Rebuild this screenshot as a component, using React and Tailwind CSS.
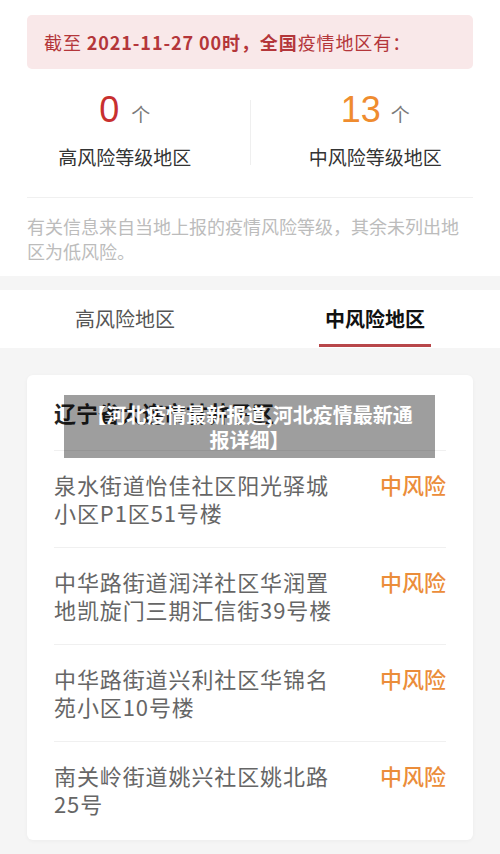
export default function App() {
  const rows = [
    ["泉水街道怡佳社区阳光驿城", "小区P1区51号楼"],
    ["中华路街道润洋社区华润置", "地凯旋门三期汇信街39号楼"],
    ["中华路街道兴利社区华锦名", "苑小区10号楼"],
    ["南关岭街道姚兴社区姚北路", "25号"],
  ];
  return (
    <div className="w-[500px] min-h-[854px] bg-[#f5f5f5] overflow-hidden relative" style={{ fontFamily: '"Noto Sans CJK SC", "Noto Sans", sans-serif' }}>
      <div className="bg-white px-[27px] pt-[15px] pb-[12px]">
        <div className="h-[54px] rounded-[5px] bg-[#f9e8e9] pl-[17px] flex items-center text-[18px] text-[#b4363a] tracking-[0.9px]">
          <span>截至&nbsp;</span>
          <span className="font-semibold">2021-11-27 00时，全国</span>
          <span>疫情地区有：</span>
        </div>
        <div className="flex h-[128px] relative -mx-[27px]">
          <div className="flex-1 flex flex-col items-center pt-[18px]">
            <div className="flex items-baseline h-[46px]">
              <span className="text-[36px] leading-[46px] text-[#c8302f] font-medium" style={{ fontFamily: '"Liberation Sans", sans-serif' }}>0</span>
              <span className="text-[19px] text-[#7a7a7a] ml-[12px]">个</span>
            </div>
            <div className="text-[19px] text-[#333] mt-[11px] leading-[26px]">高风险等级地区</div>
          </div>
          <div className="w-px bg-[#efefef] mt-[31px] h-[65px]" />
          <div className="flex-1 flex flex-col items-center pt-[18px]">
            <div className="flex items-baseline h-[46px]">
              <span className="text-[36px] leading-[46px] text-[#ef8c2f] font-medium" style={{ fontFamily: '"Liberation Sans", sans-serif' }}>13</span>
              <span className="text-[19px] text-[#7a7a7a] ml-[10px]">个</span>
            </div>
            <div className="text-[19px] text-[#333] mt-[11px] leading-[26px]">中风险等级地区</div>
          </div>
        </div>
        <div className="h-px bg-[#f0f0f0]" />
        <div className="text-[18px] leading-[25px] text-[#bcbcbc] pt-[16px]">
          有关信息来自当地上报的疫情风险等级，其余未列出地区为低风险。
        </div>
      </div>
      <div className="h-[14px]" />
      <div className="bg-white h-[58px] flex">
        <div className="flex-1 flex items-center justify-center text-[20px] text-[#555]">高风险地区</div>
        <div className="flex-1 flex flex-col items-center justify-center relative">
          <span className="text-[20px] text-[#111] font-semibold">中风险地区</span>
          <div className="absolute bottom-[1px] left-[69px] w-[112px] h-[3px] bg-[#b8474a]" />
        </div>
      </div>
      <div className="h-[27px]" />
      <div className="mx-[27px] bg-white rounded-[6px] shadow-[0_1px_4px_rgba(0,0,0,0.04)] px-[27px] pb-[2px]">
        <div className="h-[76px] flex items-center text-[22px] font-semibold text-[#222] border-b border-[#f0f0f0]">辽宁省大连市甘井子区</div>
        {rows.map((r, i) => (
          <div key={i} className={`flex justify-between pt-[19px] pb-[21px] ${i < rows.length - 1 ? "border-b border-[#f0f0f0]" : ""}`}>
            <div className="text-[22px] leading-[28px] text-[#666] tracking-[0.9px]">
              <div>{r[0]}</div>
              <div>{r[1]}</div>
            </div>
            <div className="text-[22px] leading-[28px] text-[#eb8d3a] font-medium">中风险</div>
          </div>
        ))}
      </div>
      <div className="absolute left-[64px] top-[395px] w-[371px] h-[63px] bg-[rgba(0,0,0,0.38)] flex items-center justify-center text-center text-white font-bold text-[20px] leading-[25px] px-[16px]">
        【河北疫情最新报道,河北疫情最新通报详细】
      </div>
    </div>
  );
}
